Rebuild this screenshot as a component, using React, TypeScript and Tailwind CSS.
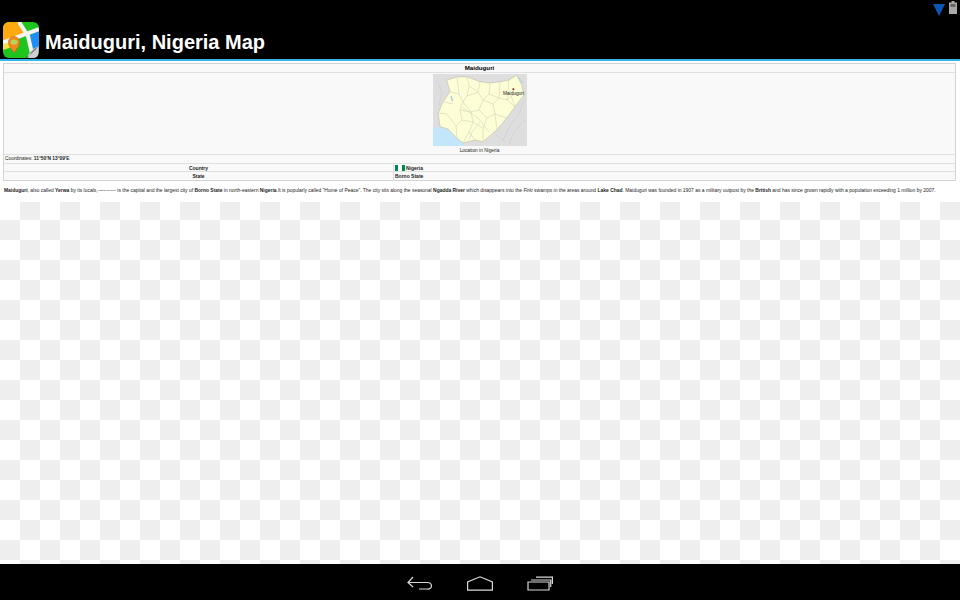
const Map = () => (
  <svg viewBox="0 0 94 72" className="w-[94px] h-[72px] block" aria-label="Location in Nigeria">
    <rect width="94" height="72" fill="#dedede" />
    <path d="M0 54 7 52.7 15 55 23.7 64 30 69 32 72H0Z" fill="#c4e6fb" />
    <path d="M13.7 6 24 3 33.7 2.7 47 7.7 57 9 67 7.7 76 6 83.7 1 88.7 11 91 21 82 32.7 73.7 44 63.7 56 50 67.7 42 66 30 69 23.7 64 15 55 7 52.7 5.3 39 10 27.7 17 17.7Z" fill="#fdfdd6" stroke="#bdbda6" strokeWidth="0.6" />
    <g fill="none" stroke="#cfcfb6" strokeWidth="0.55">
      <path d="M17 17.7 26 20 30 28 27 36 29 46 23 52 24 64" />
      <path d="M24 3 26 20M33.7 2.7 36 12 34 22 30 28" />
      <path d="M47 7.7 45 18 36 12M34 22 45 18 50 26 46 36 38 38 30 28" />
      <path d="M57 9 56 20 50 26 60 30 66 24 74 26 82 32.7" />
      <path d="M67 7.7 66 24M56 20 66 24M76 6 74 26" />
      <path d="M46 36 54 44 50 54 50 67.7M60 30 62 40 73.7 44M54 44 62 40 64 56" />
      <path d="M27 36 38 38 40 48 29 46M40 48 50 54M40 48 36 58 42 66M36 58 30 69M5.3 39 14 40 23 52M10 27.7 20 30" />
      <path d="M82 32.7 78 22 88 18M74 26 78 22" />
    </g>
    <path d="M36 66 39 58 47 48M30 34 45 44 56 58" fill="none" stroke="#b8ccc8" strokeWidth="0.45" />
    <path d="M18 22 19.5 27" stroke="#9ccbe8" strokeWidth="1.3" />
    <path d="M3 6 9 18 6 32M91 26 86 40 78 50 70 66M76 70 82 56 92 46M62 60 72 68" fill="none" stroke="#cacaca" strokeWidth="0.55" />
    <path d="M86 4 90 9" stroke="#a8d2ec" strokeWidth="1.1" />
    <circle cx="80.3" cy="15.3" r="1" fill="#8b1a1a" />
    <text x="80.5" y="21" textAnchor="middle" fontSize="4.8" fill="#222" style={{ fontFamily: '"Liberation Sans", sans-serif' }}>Maiduguri</text>
  </svg>
);

const AppIcon = () => (
  <svg viewBox="0 0 36 36" className="w-9 h-9 shrink-0">
    <defs>
      <clipPath id="ic"><rect width="36" height="36" rx="6" /></clipPath>
    </defs>
    <g clipPath="url(#ic)">
      <rect width="36" height="36" fill="#1fc41f" />
      <path d="M0 0H17L24 13 0 20Z" fill="#fda90f" />
      <path d="M0 22 9 19 9 25 0 28Z" fill="#f4e04a" />
      <path d="M36 9V30L30 29 27 13Z" fill="#1d8ef5" />
      <path d="M16 0 25 14 30 36" stroke="#f4f4f4" strokeWidth="4" fill="none" />
      <path d="M0 20.5 36 7" stroke="#f4f4f4" strokeWidth="4" fill="none" />
      <path d="M36 24 35 36H24C25 31 30 26 36 24Z" fill="#cfcfcf" />
      <path d="M36 24C31 27 27 30 25 36L22 36C27 33 32 29 36 24Z" fill="#333" opacity="0.55" />
    </g>
    <path d="M11 31C9 27 5.5 25 5.5 20A5.5 5.5 0 0 1 16.5 20C16.5 25 13 27 11 31Z" fill="#f28a1d" stroke="#c0660f" strokeWidth="0.6" />
    <ellipse cx="11" cy="20" rx="3.4" ry="2.6" fill="#b6d85a" />
  </svg>
);

export default function App() {
  const font = { fontFamily: '"Liberation Sans", Arial, sans-serif' };
  return (
    <div className="w-[960px] h-[600px] flex flex-col bg-white overflow-hidden" style={font}>
      <header className="h-[61px] shrink-0 bg-black border-b-2 border-[#33b5e5] flex flex-col">
        <div className="h-[22px] flex justify-end items-start gap-[4px] pt-[1px] pr-[3px]">
          <svg viewBox="0 0 12 12" className="w-3 h-3 mt-[3px]"><path d="M0 0H12L6 12Z" fill="#0b55b5" /></svg>
          <svg viewBox="0 0 8 13" className="w-2 h-[13px]"><path d="M2.5 0H5.5V1.5H8V13H0V1.5H2.5Z" fill="#a9a9a9" /><rect x="1.5" y="3" width="5" height="3" fill="#666" /></svg>
        </div>
        <div className="flex items-start gap-[6px] pl-[3px]">
          <AppIcon />
          <h1 className="text-[20px] leading-[24px] font-bold text-white mt-[8px]">Maiduguri, Nigeria Map</h1>
        </div>
      </header>

      <main className="flex-1 min-h-0 flex flex-col">
        <section className="h-[141px] shrink-0 pt-[2px] px-[3px] text-[#222] text-[5px] leading-[8px]">
          <div className="w-[953px] border border-[#d4d4d4] bg-[#f9f9f9] flex flex-col">
            <div className="h-[9px] flex items-center justify-center font-bold text-[6.2px] text-black border-b border-[#e0e0e0]">Maiduguri</div>
            <div className="h-[82px] pt-[1px] flex flex-col items-center border-b border-[#e0e0e0]">
              <Map />
              <div className="mt-[1px] text-[4.8px] leading-[7px]">Location in Nigeria</div>
            </div>
            <div className="h-[9px] flex items-center pl-[1px] text-[4.85px] border-b border-[#e0e0e0]">
              Coordinates:&nbsp;<b>11°50′N 13°09′E</b>
            </div>
            <div className="h-[8px] grid grid-cols-[390px_1fr] border-b border-[#e0e0e0] font-bold">
              <div className="text-center border-r border-[#e0e0e0]">Country</div>
              <div className="flex items-center pl-[1px]">
                <span className="w-[10px] h-[6px] mr-[1px] flex">
                  <i className="flex-1 bg-[#008751]" /><i className="flex-1 bg-white" /><i className="flex-1 bg-[#008751]" />
                </span>
                Nigeria
              </div>
            </div>
            <div className="h-[8px] grid grid-cols-[390px_1fr] font-bold">
              <div className="text-center border-r border-[#e0e0e0]">State</div>
              <div className="pl-[1px]">Borno State</div>
            </div>
          </div>
          <p className="mt-[6px] ml-[1px] whitespace-nowrap text-[4.94px] leading-[8px] text-[#222]">
            <b>Maiduguri</b>, also called <b>Yerwa</b> by its locals,<sup className="text-[2.5px]">[citation needed]</sup> is the capital and the largest city of <b>Borno State</b> in north-eastern <b>Nigeria</b>.It is popularly called "Home of Peace". The city sits along the seasonal <b>Ngadda River</b> which disappears into the <i>Firki</i> swamps in the areas around <b>Lake Chad</b>. Maiduguri was founded in 1907 as a military outpost by the <b>British</b> and has since grown rapidly with a population exceeding 1 million by 2007.
          </p>
        </section>
        <div className="flex-1 bg-[conic-gradient(#eeeeee_0_25%,#ffffff_25%_50%,#eeeeee_50%_75%,#ffffff_75%)] bg-[length:40px_40px] bg-[position:0_-2px]" />
      </main>

      <nav className="h-9 shrink-0 bg-black flex items-center justify-center gap-[34px] pt-[2px] text-[#d8d8d8]">
        <svg viewBox="0 0 26 14" className="w-[26px] h-[14px]" fill="none" stroke="currentColor" strokeWidth="1.2">
          <path d="M6 1 1 6.5 6 11M1 6.5H20.5A4 3.5 0 0 1 24.5 10 3.5 3 0 0 1 20.5 13H12" />
        </svg>
        <svg viewBox="0 0 26 15" className="w-[26px] h-[15px]" fill="none" stroke="currentColor" strokeWidth="1.2">
          <path d="M0.6 14.2V6L13 0.8 25.4 6V14.2Z" />
        </svg>
        <svg viewBox="0 0 26 15" className="w-[26px] h-[15px]" fill="none" stroke="currentColor" strokeWidth="1.2">
          <path d="M1 6H22V14H1ZM4 4H23.7V11M9 1.2H25.4V8" />
        </svg>
      </nav>
    </div>
  );
}
